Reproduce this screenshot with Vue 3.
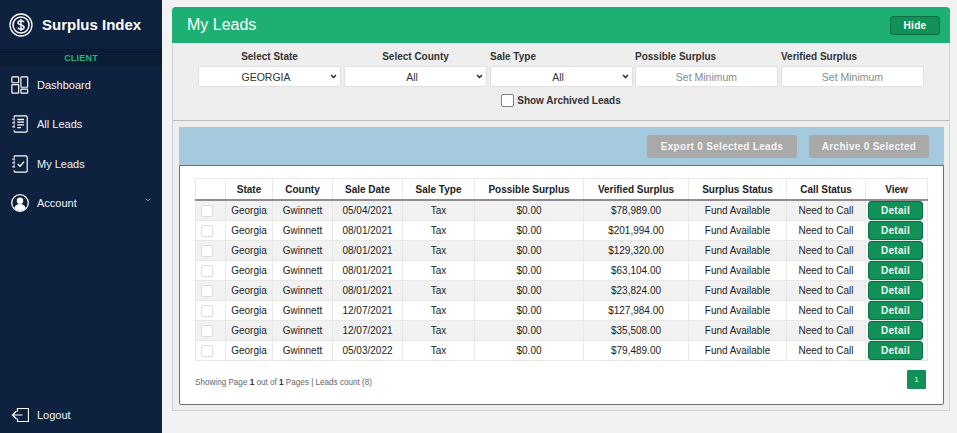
<script setup>
import { ref } from "vue";

const showArchived = ref(false);

const leads = ref([
  { id: 1, date: "05/04/2021", verified: "$78,989.00" },
  { id: 2, date: "08/01/2021", verified: "$201,994.00" },
  { id: 3, date: "08/01/2021", verified: "$129,320.00" },
  { id: 4, date: "08/01/2021", verified: "$63,104.00" },
  { id: 5, date: "08/01/2021", verified: "$23,824.00" },
  { id: 6, date: "12/07/2021", verified: "$127,984.00" },
  { id: 7, date: "12/07/2021", verified: "$35,508.00" },
  { id: 8, date: "05/03/2022", verified: "$79,489.00" },
]);
</script>

<template>
  <div class="page">
    <aside class="sidebar">
      <div class="brand">
        <svg class="brand-logo" viewBox="0 0 24 24" fill="none" stroke="#fff">
          <circle cx="12" cy="12" r="11" stroke-width="1.3" />
          <circle cx="12" cy="12" r="8" stroke-width="1.5" />
          <path d="M15 9.2c-.5-1-1.6-1.5-3-1.5-1.700 0-3 .8-3 2.100 0 2.900 6.100 1.500 6.100 4.400 0 1.300-1.400 2.100-3.100 2.100-1.500 0-2.700-.6-3.200-1.700M12 6v12" stroke-width="1.400" />
        </svg>
        <span>Surplus Index</span>
      </div>
      <div class="role">CLIENT</div>
      <nav class="menu">
        <a class="menu-item">
          <svg class="menu-icon" viewBox="0 0 20 20" fill="none" stroke="#fff" stroke-width="1.300">
            <rect x="1" y="1" width="7.500" height="6.500" rx=".8" />
            <rect x="1" y="9.500" width="7.500" height="9.500" rx=".8" />
            <rect x="11" y="1" width="7.500" height="11.500" rx=".8" />
            <rect x="11" y="14.500" width="7.500" height="4.500" rx=".8" />
          </svg>
          <span>Dashboard</span>
        </a>
        <a class="menu-item">
          <svg class="menu-icon" viewBox="0 0 20 20" fill="none" stroke="#fff" stroke-width="1.300">
            <path d="M3.500 3V2a1 1 0 0 1 1-1h12a1.500 1.500 0 0 1 1.500 1.500v15a1.500 1.500 0 0 1-1.500 1.500h-12a1 1 0 0 1-1-1v-1M3.500 6v1.500M3.500 10.500V12" />
            <path d="M1.500 4.500h3M1.500 8.800h3M1.500 13.200h3" />
            <path d="M7 5h7.500M7 8h7.500M7 11h7.500M7 14h4" stroke-width="1.400" />
          </svg>
          <span>All Leads</span>
        </a>
        <a class="menu-item">
          <svg class="menu-icon" viewBox="0 0 20 20" fill="none" stroke="#fff" stroke-width="1.300">
            <path d="M3.500 3V2a1 1 0 0 1 1-1h12a1.500 1.500 0 0 1 1.500 1.500v15a1.500 1.500 0 0 1-1.500 1.500h-12a1 1 0 0 1-1-1v-1M3.500 6v1.500M3.500 10.500V12" />
            <path d="M1.500 4.500h3M1.500 8.800h3M1.500 13.200h3" />
            <path d="M7.500 10l2.500 2.500 4.500-5" stroke-width="1.400" />
          </svg>
          <span>My Leads</span>
        </a>
        <a class="menu-item">
          <svg class="menu-icon" viewBox="0 0 20 20" fill="none">
            <circle cx="10" cy="10" r="9.200" stroke="#fff" stroke-width="1.400" />
            <circle cx="10" cy="7.500" r="3.600" fill="#fff" />
            <path d="M3.600 15.500c1-3 3.400-4.300 6.400-4.300s5.400 1.300 6.400 4.300A8.700 8.700 0 0 1 10 19a8.700 8.700 0 0 1-6.400-3.500z" fill="#fff" />
          </svg>
          <span>Account</span>
          <svg class="caret" viewBox="0 0 8 5" fill="none" stroke="#aab4c2" stroke-width="1">
            <path d="M1 1l3 2.500L7 1" />
          </svg>
        </a>
      </nav>
      <a class="menu-item logout">
        <svg class="menu-icon" viewBox="0 0 18 18" fill="none" stroke="#fff" stroke-width="1.200">
          <path d="M6.500 5.500v-3h11v13h-11v-3" />
          <path d="M11.500 9H1.500M5.500 5L1.500 9l4 4" />
        </svg>
        <span>Logout</span>
      </a>
    </aside>

    <main class="content">
      <section class="panel">
        <header class="panel-head">
          <h1>My Leads</h1>
          <button type="button" class="hide-btn">Hide</button>
        </header>

        <div class="filters">
          <div class="filter-grid">
            <label class="field center">
              <span>Select State</span>
              <select><option>GEORGIA</option></select>
            </label>
            <label class="field center">
              <span>Select County</span>
              <select><option>All</option></select>
            </label>
            <label class="field">
              <span>Sale Type</span>
              <select><option>All</option></select>
            </label>
            <label class="field">
              <span>Possible Surplus</span>
              <input type="text" placeholder="Set Minimum" />
            </label>
            <label class="field">
              <span>Verified Surplus</span>
              <input type="text" placeholder="Set Minimum" />
            </label>
          </div>
          <label class="archived">
            <input v-model="showArchived" type="checkbox" />
            <span>Show Archived Leads</span>
          </label>
        </div>

        <div class="results">
          <div class="actions">
            <button type="button" class="action-btn export">Export 0 Selected Leads</button>
            <button type="button" class="action-btn archive">Archive 0 Selected</button>
          </div>
          <div class="table-card">
            <table class="leads-table">
              <colgroup>
                <col style="width: 30px" />
                <col style="width: 47px" />
                <col style="width: 60px" />
                <col style="width: 70px" />
                <col style="width: 72px" />
                <col style="width: 109px" />
                <col style="width: 105px" />
                <col style="width: 98px" />
                <col style="width: 79px" />
                <col style="width: 62px" />
              </colgroup>
              <thead>
                <tr>
                  <th></th>
                  <th>State</th>
                  <th>County</th>
                  <th>Sale Date</th>
                  <th>Sale Type</th>
                  <th>Possible Surplus</th>
                  <th>Verified Surplus</th>
                  <th>Surplus Status</th>
                  <th>Call Status</th>
                  <th>View</th>
                </tr>
              </thead>
              <tbody>
                <tr v-for="lead in leads" :key="lead.id">
                  <td><span class="row-check"></span></td>
                  <td>Georgia</td>
                  <td>Gwinnett</td>
                  <td>{{ lead.date }}</td>
                  <td>Tax</td>
                  <td>$0.00</td>
                  <td>{{ lead.verified }}</td>
                  <td>Fund Available</td>
                  <td>Need to Call</td>
                  <td class="view-cell"><button type="button" class="detail-btn">Detail</button></td>
                </tr>
              </tbody>
            </table>
            <div class="table-foot">
              <p>Showing Page <b>1</b> out of <b>1</b> Pages | Leads count (8)</p>
              <span class="page-num">1</span>
            </div>
          </div>
        </div>
      </section>
    </main>
  </div>
</template>

<style>
html,
body {
  margin: 0;
  background: #f2f2f2;
}
</style>

<style scoped>
.page {
  display: flex;
  width: 957px;
  height: 433px;
  overflow: hidden;
  font-family: "Liberation Sans", Arial, sans-serif;
  color: #222;
}

.sidebar {
  display: flex;
  flex-direction: column;
  flex: 0 0 162px;
  background: #0e2240;
  color: #f1f3f6;
}

.brand {
  display: flex;
  align-items: center;
  gap: 9px;
  height: 49px;
  padding-left: 9px;
  font-size: 15px;
  font-weight: 700;
  color: #fff;
}

.brand-logo {
  width: 24px;
  height: 24px;
}

.role {
  height: 16px;
  line-height: 16px;
  background: #0b1c35;
  border-top: 1px solid #081629;
  text-align: center;
  font-size: 9px;
  font-weight: 700;
  color: #1fb573;
  letter-spacing: 0.2px;
}

.menu {
  display: flex;
  flex-direction: column;
  margin-top: -1px;
}

.menu-item {
  display: flex;
  align-items: center;
  gap: 8px;
  height: 39.500px;
  padding-left: 11px;
  font-size: 11px;
}

.menu-icon {
  width: 18px;
  height: 18px;
  flex: none;
}

.caret {
  width: 6px;
  height: 4px;
  margin-left: 60px;
  margin-top: -6px;
}

.logout {
  margin-top: auto;
  height: 36px;
}

.content {
  flex: 1;
  min-width: 0;
  padding: 7px 7px 0 10px;
}

.panel {
  height: 404px;
  box-sizing: border-box;
  background: #eeeeee;
  border: 1px solid #d4d4d4;
  border-top: 0;
  border-radius: 4px 4px 0 0;
}

.panel-head {
  display: flex;
  align-items: center;
  justify-content: space-between;
  height: 36px;
  margin: 0 -1px;
  padding: 0 10px 0 15px;
  background: #1eb072;
  border-radius: 4px 4px 0 0;
}

.panel-head h1 {
  margin: 0;
  font-size: 16px;
  font-weight: 400;
  color: #fff;
}

.hide-btn {
  width: 50px;
  height: 19px;
  padding: 0;
  border: 1px solid #0b6e45;
  border-radius: 3px;
  background: #119157;
  color: #fff;
  font: 700 10px "Liberation Sans", Arial, sans-serif;
  letter-spacing: 0.3px;
}

.filters {
  height: 78px;
  box-sizing: border-box;
  padding-top: 8px;
  border-bottom: 1px solid #bdbdbd;
}

.filter-grid {
  display: grid;
  grid-template-columns: 146px 146px 145px 146px 143px;
  padding-left: 25px;
}

.field {
  display: flex;
  flex-direction: column;
  gap: 3px;
  width: 143px;
}

.field span {
  font-size: 10px;
  line-height: 12px;
  font-weight: 700;
  color: #333;
}

.field.center span {
  text-align: center;
}

.field select,
.field input {
  width: 100%;
  height: 21px;
  box-sizing: border-box;
  border: 1px solid #e0e0e0;
  border-radius: 2px;
  background: #fff;
  font: 10.500px "Liberation Sans", Arial, sans-serif;
  color: #333;
  text-align: center;
  outline: none;
}

.field select {
  appearance: none;
  padding: 0 7px 0 0;
  background: #fff url("data:image/svg+xml,%3Csvg xmlns='http://www.w3.org/2000/svg' width='7' height='5'%3E%3Cpath d='M1 1l2.500 2.500L6 1' fill='none' stroke='%23222' stroke-width='1.300'/%3E%3C/svg%3E") no-repeat right 3px center;
}

.field input::placeholder {
  color: #8a8a8a;
}

.archived {
  display: flex;
  align-items: center;
  justify-content: center;
  gap: 3px;
  margin-top: 7px;
  font-size: 10px;
  font-weight: 700;
  color: #333;
}

.archived input {
  appearance: none;
  width: 13px;
  height: 13px;
  margin: 0;
  background: #fff;
  border: 1px solid #808080;
  border-radius: 2px;
}

.results {
  margin: 6px 5px 0 6px;
}

.actions {
  display: flex;
  align-items: flex-start;
  justify-content: flex-end;
  gap: 12px;
  height: 38px;
  padding: 8px 15px 0 0;
  box-sizing: border-box;
  background: #a5c9dd;
}

.action-btn {
  height: 23px;
  padding: 0;
  border: 0;
  border-radius: 3px;
  background: #a9a9a9;
  color: #f4f4f4;
  font: 700 10px "Liberation Sans", Arial, sans-serif;
  letter-spacing: 0.3px;
}

.export {
  width: 150px;
}

.archive {
  width: 120px;
}

.table-card {
  height: 240px;
  box-sizing: border-box;
  padding: 12px 16px 0 15px;
  background: #fff;
  border: 1px solid #6f6f6f;
  border-radius: 0 0 2px 2px;
}

.leads-table {
  width: 732px;
  table-layout: fixed;
  border-collapse: collapse;
  font-size: 10px;
  text-align: center;
}

.leads-table th,
.leads-table td {
  padding: 0;
  border: 1px solid #e8e8e8;
  color: #222;
}

.leads-table th {
  height: 20px;
  border-bottom: 2px solid #8e8e8e;
  font-weight: 700;
}

.leads-table td {
  height: 19px;
}

.leads-table tbody tr:nth-child(odd) td {
  background: #f2f2f2;
}

.leads-table .view-cell {
  padding: 0 4px 0 2px;
  background: #fff !important;
  line-height: 0;
}

.row-check {
  display: inline-block;
  width: 10px;
  height: 10px;
  margin-right: 8px;
  vertical-align: middle;
  background: #fff;
  border: 1px solid #ddd;
  border-radius: 2px;
}

.detail-btn {
  display: block;
  width: 100%;
  height: 19px;
  padding: 0;
  border: 1px solid #0b6e45;
  border-radius: 3px;
  background: #119157;
  color: #eef7f2;
  font: 700 10px "Liberation Sans", Arial, sans-serif;
  letter-spacing: 0.3px;
}

.table-foot {
  display: flex;
  align-items: flex-start;
  justify-content: space-between;
  margin-top: 9px;
}

.table-foot p {
  margin: 8px 0 0;
  font-size: 8.150px;
  color: #666;
}

.table-foot b {
  color: #333;
}

.page-num {
  width: 19px;
  height: 19px;
  line-height: 19px;
  margin-right: 1px;
  background: #119157;
  border-radius: 1px;
  color: #e8f5ee;
  text-align: center;
  font-size: 8px;
}
</style>
